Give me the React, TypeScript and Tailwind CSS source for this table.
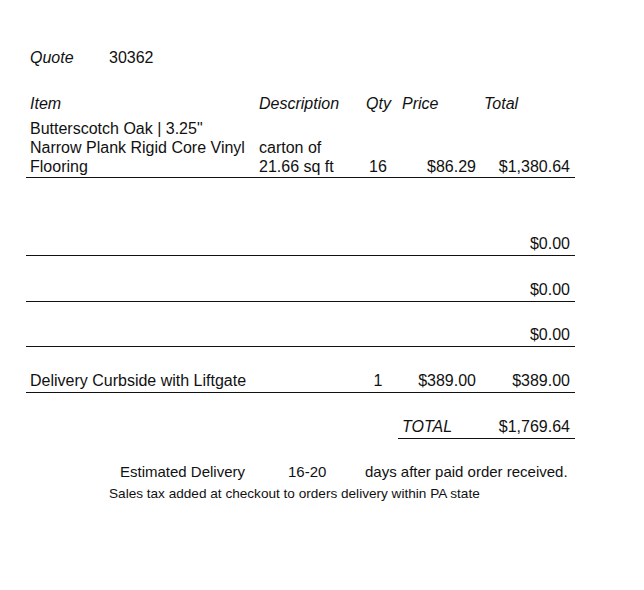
import React from "react";

const cols = "grid grid-cols-[229px_107px_36px_82px_95px]";

interface Row {
  item?: string[];
  desc?: string[];
  qty?: string;
  price?: string;
  total: string;
  height: string;
}

const rows: Row[] = [
  {
    item: ['Butterscotch Oak | 3.25"', "Narrow Plank Rigid Core Vinyl", "Flooring"],
    desc: ["carton of", "21.66 sq ft"],
    qty: "16",
    price: "$86.29",
    total: "$1,380.64",
    height: "pb-px",
  },
  { total: "$0.00", height: "h-[78px] pb-[2px]" },
  { total: "$0.00", height: "h-[46px] pb-[2px]" },
  { total: "$0.00", height: "h-[45px] pb-[2px]" },
  {
    item: ["Delivery Curbside with Liftgate"],
    qty: "1",
    price: "$389.00",
    total: "$389.00",
    height: "h-[46px] pb-[2px]",
  },
];

export default function App() {
  return (
    <div className="w-[644px] h-[590px] bg-white text-[#111] font-['Liberation_Sans',Arial,sans-serif] text-[16px] leading-[19px] pl-[26px] pt-[48px]">
      <div className="flex">
        <span className="italic pl-[4px] w-[83px]">Quote</span>
        <span>30362</span>
      </div>

      <div className={`${cols} w-[549px] mt-[27px] italic`}>
        <span className="pl-[4px]">Item</span>
        <span className="pl-[4px]">Description</span>
        <span className="pl-[4px]">Qty</span>
        <span className="pl-[4px]">Price</span>
        <span className="pl-[4px]">Total</span>
      </div>

      <div className="w-[549px] mt-[6px]">
        {rows.map((r, i) => (
          <div
            key={i}
            className={`${cols} items-end border-b border-[#111] ${r.height}`}
          >
            <div className="pl-[4px] whitespace-nowrap overflow-hidden">
              {r.item?.map((l) => (
                <div key={l}>{l}</div>
              ))}
            </div>
            <div className="pl-[4px] whitespace-nowrap">
              {r.desc?.map((l) => (
                <div key={l}>{l}</div>
              ))}
            </div>
            <div className="text-center pr-[4px]">{r.qty}</div>
            <div className="text-right pr-[4px]">{r.price}</div>
            <div className="text-right pr-[5px]">{r.total}</div>
          </div>
        ))}

        <div className={`${cols} items-end h-[46px]`}>
          <div className="col-span-3" />
          <div className="italic pl-[4px] border-b border-[#111] pb-[2px]">TOTAL</div>
          <div className="text-right pr-[5px] border-b border-[#111] pb-[2px]">$1,769.64</div>
        </div>
      </div>

      <div className="flex mt-[23px] pl-[94px] text-[15px]">
        <span className="w-[168px]">Estimated Delivery</span>
        <span className="w-[77px]">16-20</span>
        <span>days after paid order received.</span>
      </div>
      <div className="text-[13.6px] leading-[16px] pl-[83px] mt-[5px]">
        Sales tax added at checkout to orders delivery within PA state
      </div>
    </div>
  );
}
